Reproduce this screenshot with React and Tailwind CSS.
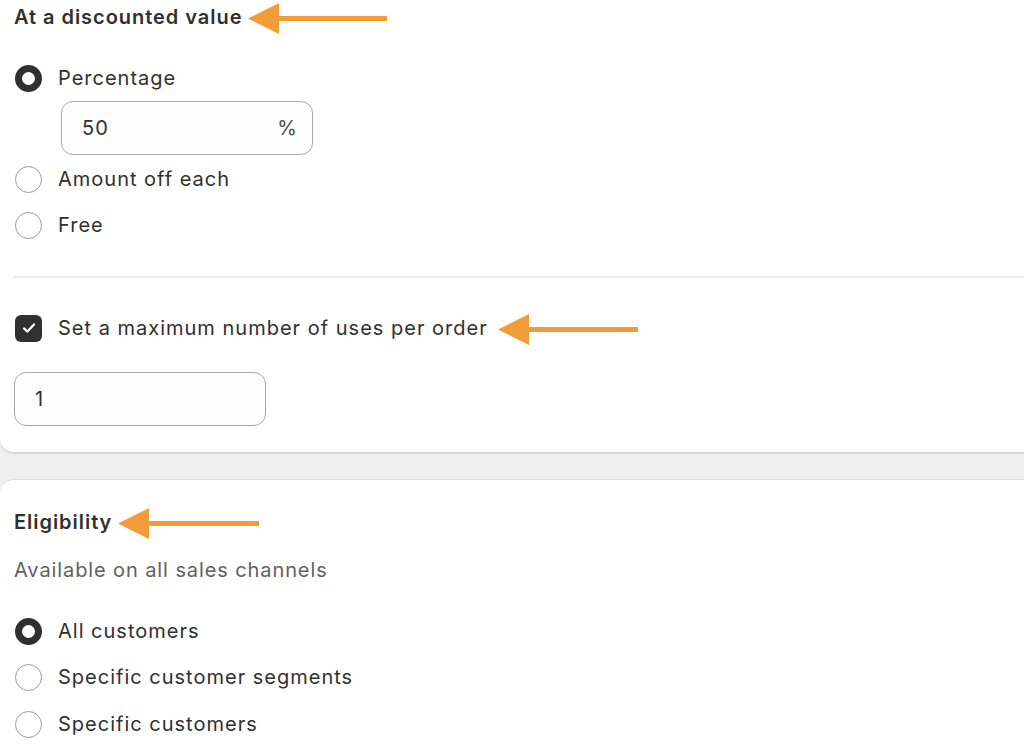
import React from "react";

const font = { fontFamily: "Inter, 'Noto Sans', sans-serif" };

function Arrow({ width = 140 }) {
  return (
    <svg width={width} height="31" viewBox={`0 0 ${width} 31`} className="shrink-0">
      <polygon points="0,15.5 31,0 31,31" fill="#f19b39" />
      <rect x="30" y="13" width={width - 30} height="5" fill="#f19b39" />
    </svg>
  );
}

function Radio({ checked }) {
  return checked ? (
    <span className="w-[27px] h-[27px] rounded-full border-[7.5px] border-[#303030] bg-white shrink-0 box-border" />
  ) : (
    <span className="w-[27px] h-[27px] rounded-full border-[1.5px] border-[#9a9a9a] bg-white shrink-0 box-border" />
  );
}

function RadioRow({ checked, label, className = "" }) {
  return (
    <div className={`flex items-center h-[30px] pl-[1px] ${className}`}>
      <Radio checked={checked} />
      <span className="ml-[16px] text-[20px] tracking-[0.05em] text-[#303030] leading-[30px]">{label}</span>
    </div>
  );
}

export default function App() {
  return (
    <div style={font} className="w-[1024px] h-[753px] overflow-hidden bg-[#efefef]">
      {/* Card 1 */}
      <div className="bg-white rounded-bl-[14px] border-b border-[#d4d4d4] shadow-[0_1px_1px_rgba(0,0,0,0.08)] pl-[14px] pb-[26px] mr-[-20px]">
        <div className="flex items-center h-[34px]">
          <span className="text-[20px] font-semibold tracking-[0.048em] text-[#303030] leading-[34px]">At a discounted value</span>
          <span className="ml-[6px] mt-[2px]"><Arrow width={139} /></span>
        </div>
        <RadioRow checked label="Percentage" className="mt-[29px]" />
        <div className="mt-[8px] ml-[47px] w-[252px] h-[54px] rounded-[12px] border border-[#a8a8a8] bg-[#fdfdfd] flex items-center justify-between pl-[20px] pr-[15px] box-border">
          <span className="text-[20px] tracking-[0.05em] text-[#303030]">50</span>
          <span className="text-[20px] text-[#4a4a4a]">%</span>
        </div>
        <RadioRow label="Amount off each" className="mt-[9px]" />
        <RadioRow label="Free" className="mt-[16px]" />
        <div className="mt-[36px] h-[2px] bg-[#ebebeb]" />
        <div className="mt-[35px] flex items-center h-[30px] pl-[1px]">
          <span className="w-[27px] h-[27px] rounded-[6px] bg-[#303030] flex items-center justify-center shrink-0">
            <svg width="18" height="18" viewBox="0 0 18 18" fill="none">
              <path d="M4 9.4 L7.4 12.6 L14 5.4" stroke="white" strokeWidth="2.2" strokeLinecap="round" strokeLinejoin="round" />
            </svg>
          </span>
          <span className="ml-[16px] text-[20px] tracking-[0.05em] text-[#303030] leading-[30px]">Set a maximum number of uses per order</span>
          <span className="ml-[10px] mt-[2px]"><Arrow width={140} /></span>
        </div>
        <div className="mt-[29px] w-[252px] h-[54px] rounded-[12px] border border-[#a8a8a8] bg-[#fdfdfd] flex items-center pl-[20px] box-border">
          <span className="text-[20px] text-[#303030]">1</span>
        </div>
      </div>

      {/* Card 2 */}
      <div className="mt-[26px] bg-white rounded-tl-[14px] border-t border-[#dcdcdc] pl-[14px] h-[400px] mr-[-20px]">
        <div className="mt-[28px] flex items-center h-[28px]">
          <span className="text-[20px] font-semibold tracking-[0.048em] text-[#303030] leading-[28px]">Eligibility</span>
          <span className="ml-[6px] mt-[2px]"><Arrow width={141} /></span>
        </div>
        <div className="mt-[20px] h-[28px] text-[20px] tracking-[0.045em] text-[#616161] leading-[28px]">Available on all sales channels</div>
        <RadioRow checked label="All customers" className="mt-[32px]" />
        <RadioRow label="Specific customer segments" className="mt-[16px]" />
        <RadioRow label="Specific customers" className="mt-[17px]" />
      </div>
    </div>
  );
}
